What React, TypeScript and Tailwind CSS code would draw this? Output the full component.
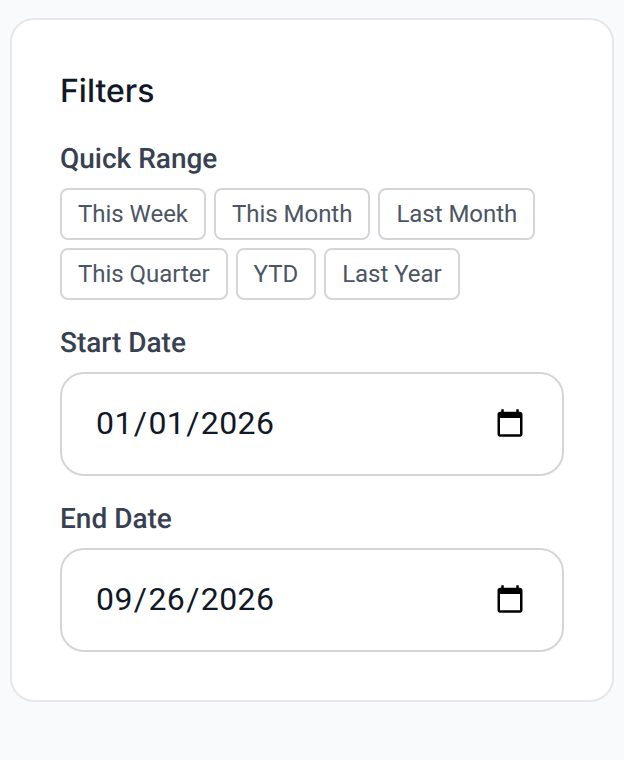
const ranges = ["This Week", "This Month", "Last Month", "This Quarter", "YTD", "Last Year"];

function DateField({ label, value }: { label: string; value: string }) {
  return (
    <div className="mt-[23px]">
      <label className="block text-[28px] leading-[40px] font-medium text-[#374151]">{label}</label>
      <input
        type="date"
        defaultValue={value}
        className="mt-[9px] block w-full h-[104px] pl-[33px] pr-[34px] border-2 border-[#d4d5d8] rounded-[24px] bg-white text-[32px] tracking-[0.4px] text-[#111827] [&::-webkit-datetime-edit]:mb-[2px]"
      />
    </div>
  );
}

export default function App() {
  return (
    <div className="min-h-[760px] bg-[#f9fafb] px-[10px] pt-[18px] font-['Roboto',sans-serif] [text-rendering:geometricPrecision]">
      <div className="h-[684px] bg-white border-2 border-[#e5e7eb] rounded-[24px] px-[48px] pt-[49px]">
        <h2 className="text-[32px] leading-[44px] font-medium text-[#111827] font-['Inter',sans-serif]">Filters</h2>
        <div className="mt-[26px]">
          <label className="block text-[28px] leading-[40px] font-medium text-[#374151]">Quick Range</label>
          <div className="mt-[9px] flex flex-wrap gap-2">
            {ranges.map((r) => (
              <button
                key={r}
                className="h-[52px] px-4 border-2 border-[#d4d5d8] rounded-[8px] bg-white text-[24px] tracking-[-0.03px] text-[#4b5563]"
              >
                {r}
              </button>
            ))}
          </div>
        </div>
        <DateField label="Start Date" value="2026-01-01" />
        <DateField label="End Date" value="2026-09-26" />
      </div>
    </div>
  );
}
